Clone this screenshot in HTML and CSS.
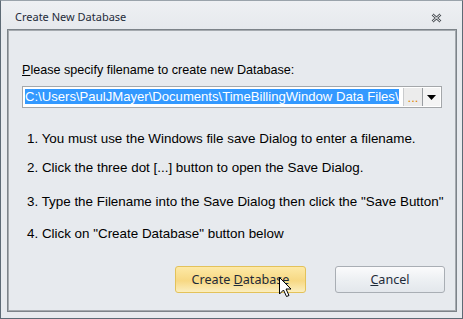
FILE: index.html
```html
<!DOCTYPE html>
<html lang="en">
<head>
    <meta charset="UTF-8">
    <title>Create New Database</title>
    <link rel="stylesheet" href="styles.css">
</head>
<body>
    <div class="window">
        <div class="titlebar">
            <span class="title">Create New Database</span>
            <svg class="close" width="11" height="10" viewBox="0 0 11 10">
                <path d="M1.5 1.5 L9.5 8.5 M9.5 1.5 L1.5 8.5" stroke="#4a4f55" stroke-width="2.6" fill="none"/>
                <path d="M1.5 1.5 L9.5 8.5 M9.5 1.5 L1.5 8.5" stroke="#f4f5f7" stroke-width="1" fill="none"/>
            </svg>
        </div>
        <div class="panel">
            <div class="prompt"><u>P</u>lease specify filename to create new Database:</div>
            <div class="filebox">
                <div class="path"><span class="sel">C:\Users\PaulJMayer\Documents\TimeBillingWindow Data Files\</span></div>
                <div class="dots">...</div>
                <div class="drop">
                    <svg width="9" height="5" viewBox="0 0 9 5"><path d="M0 0 H9 L4.5 5 Z" fill="#000"/></svg>
                </div>
            </div>
            <div class="step step1">1. You must use the Windows file save Dialog to enter a filename.</div>
            <div class="step step2">2. Click the three dot [...] button to open the Save Dialog.</div>
            <div class="step step3">3. Type the Filename into the Save Dialog then click the "Save Button"</div>
            <div class="step step4">4. Click on "Create Database" button below</div>
            <div class="buttons">
                <div class="btn btn-create">
                    <span>Create <u>D</u>atabase</span>
                    <svg class="cursor" width="13" height="21" viewBox="0 0 13 21">
                        <path d="M0.5 0.5 V17 L4.5 13 L7.5 19.5 L10 18.5 L7 12 H12 Z" fill="#fff" stroke="#000" stroke-width="1"/>
                    </svg>
                </div>
                <div class="btn btn-cancel"><span><u>C</u>ancel</span></div>
            </div>
        </div>
    </div>
</body>
</html>
```

FILE: styles.css
```css
body {
    margin: 0;
    padding: 0;
    background: #e8ebef;
}
.window {
    width: 463px;
    height: 319px;
    box-sizing: border-box;
    border: 1px solid #5d6a75;
    border-top-color: #9aa3ab;
    background: #e7eaee;
    display: flex;
    flex-direction: column;
}
.titlebar {
    height: 28px;
    display: flex;
    align-items: center;
    justify-content: space-between;
    padding: 0 20px 0 14px;
    background: linear-gradient(#eef0f3, #e6e9ed);
}
.title {
    font-family: "Noto Sans", "DejaVu Sans", sans-serif;
    font-size: 11px;
    color: #1f2b3a;
    margin-top: 3px;
}
.close {
    margin-top: 5px;
}
.panel {
    margin: 0 5px 6px 6px;
    flex: 1;
    border: 1px solid #7c8389;
    box-shadow: inset 1px 1px 0 #a5aaaf, inset -1px -1px 0 #a5aaaf;
    background: #e7eaee;
    padding: 0 0 0 14px;
    display: flex;
    flex-direction: column;
    font-family: "Liberation Sans", Arial, sans-serif;
    color: #000;
}
.prompt {
    font-size: 12.6px;
    line-height: 16px;
    margin-top: 32px;
}
.filebox {
    margin-top: 8px;
    width: 420px;
    height: 22px;
    box-sizing: border-box;
    border: 1px solid #a4a7aa;
    background: #fff;
    display: flex;
    padding: 1px;
}
.path {
    flex: 1;
    padding: 1px 0 0 1px;
    overflow: hidden;
    white-space: nowrap;
    font-size: 13.1px;
    line-height: 16px;
}
.sel {
    background: #3399ff;
    color: #fff;
}
.dots {
    width: 18px;
    border-left: 1px solid #c9cbcd;
    background: #ececec;
    color: #e08400;
    font-size: 13px;
    line-height: 20px;
    text-align: center;
}
.drop {
    width: 17px;
    border-left: 1px solid #9a9ea2;
    background: #f4f4f4;
    display: flex;
    align-items: center;
    justify-content: center;
}
.step {
    line-height: 16px;
    padding-left: 5px;
    font-size: 13.4px;
    white-space: nowrap;
}
.step1 { margin-top: 23px; }
.step2 { margin-top: 13px; }
.step3 { margin-top: 18px; }
.step4 { margin-top: 16px; }
.buttons {
    margin-top: 24px;
    margin-right: 11px;
    display: flex;
    justify-content: flex-end;
    gap: 29px;
}
.btn {
    height: 27px;
    box-sizing: border-box;
    border-radius: 3px;
    font-family: "Noto Sans", "DejaVu Sans", sans-serif;
    font-size: 12.6px;
    color: #1e2a38;
    display: flex;
    align-items: center;
    justify-content: center;
    position: relative;
}
.btn-create {
    width: 131px;
    border: 1px solid #e3c25a;
    background: linear-gradient(#fde9a6, #f7d883 55%, #fbeebe);
}
.btn-cancel {
    width: 110px;
    border: 1px solid #a9aeb4;
    background: linear-gradient(#fbfbfc, #edf0f3 50%, #e3e7ec);
}
.cursor {
    position: absolute;
    left: 103px;
    top: 10px;
}
```
